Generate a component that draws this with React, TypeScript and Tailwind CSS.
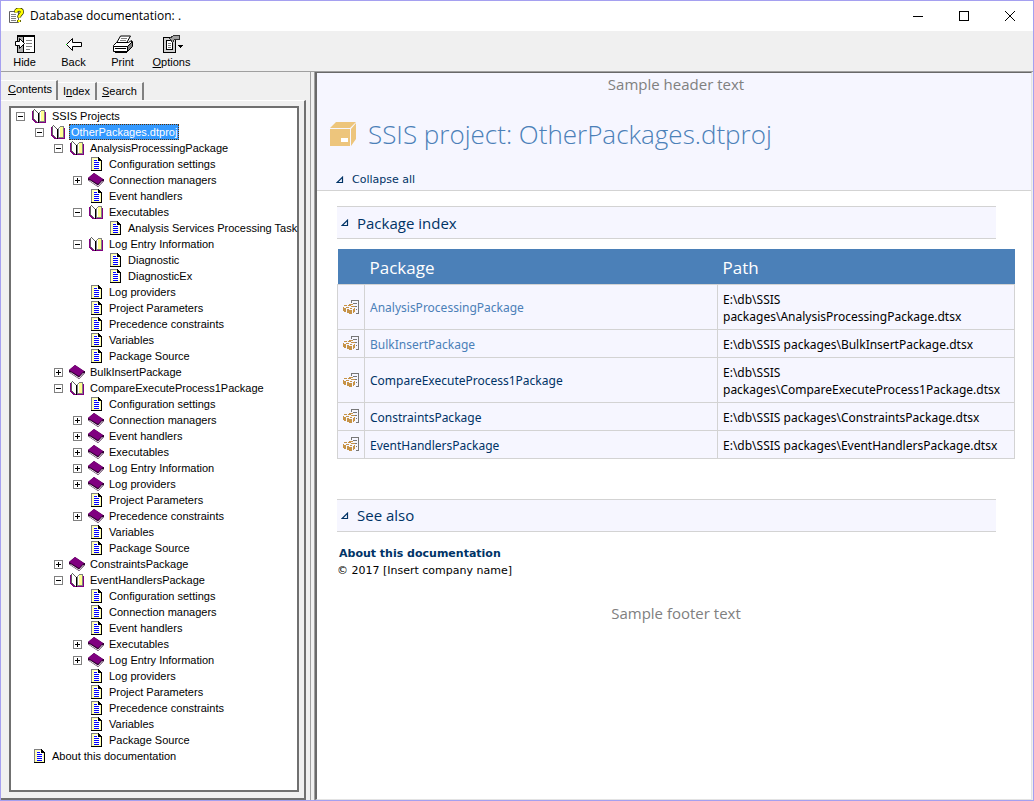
import { ReactNode } from 'react'
import clsx from 'clsx'

const TREE_FONT = 'font-["Liberation_Sans",Arial,sans-serif]'
const UI_FONT = 'font-["Open_Sans","Noto_Sans",sans-serif]'
const CELL_FONT = 'font-["Noto_Sans","Open_Sans",sans-serif]'
const VERDANA = 'font-["DejaVu_Sans",Verdana,sans-serif]'

type Kind = 'open' | 'closed' | 'page'

interface Node {
  depth: number
  kind: Kind
  label: string
  selected?: boolean
}

const open = (depth: number, label: string, selected = false): Node => ({ depth, kind: 'open', label, selected })
const closed = (depth: number, label: string): Node => ({ depth, kind: 'closed', label })
const page = (depth: number, label: string): Node => ({ depth, kind: 'page', label })

const NODES: Node[] = [
  open(0, 'SSIS Projects'),
  open(1, 'OtherPackages.dtproj', true),
  open(2, 'AnalysisProcessingPackage'),
  page(3, 'Configuration settings'),
  closed(3, 'Connection managers'),
  page(3, 'Event handlers'),
  open(3, 'Executables'),
  page(4, 'Analysis Services Processing Task'),
  open(3, 'Log Entry Information'),
  page(4, 'Diagnostic'),
  page(4, 'DiagnosticEx'),
  page(3, 'Log providers'),
  page(3, 'Project Parameters'),
  page(3, 'Precedence constraints'),
  page(3, 'Variables'),
  page(3, 'Package Source'),
  closed(2, 'BulkInsertPackage'),
  open(2, 'CompareExecuteProcess1Package'),
  page(3, 'Configuration settings'),
  closed(3, 'Connection managers'),
  closed(3, 'Event handlers'),
  closed(3, 'Executables'),
  closed(3, 'Log Entry Information'),
  closed(3, 'Log providers'),
  page(3, 'Project Parameters'),
  closed(3, 'Precedence constraints'),
  page(3, 'Variables'),
  page(3, 'Package Source'),
  closed(2, 'ConstraintsPackage'),
  open(2, 'EventHandlersPackage'),
  page(3, 'Configuration settings'),
  page(3, 'Connection managers'),
  page(3, 'Event handlers'),
  closed(3, 'Executables'),
  closed(3, 'Log Entry Information'),
  page(3, 'Log providers'),
  page(3, 'Project Parameters'),
  page(3, 'Precedence constraints'),
  page(3, 'Variables'),
  page(3, 'Package Source'),
  page(0, 'About this documentation'),
]

const PACKAGES = [
  { name: 'AnalysisProcessingPackage', visited: true },
  { name: 'BulkInsertPackage', visited: true },
  { name: 'CompareExecuteProcess1Package', visited: false },
  { name: 'ConstraintsPackage', visited: false },
  { name: 'EventHandlersPackage', visited: false },
]

export default function App() {
  return (
    <div className="flex min-h-screen flex-col border border-[#a5a0f0] bg-[#f0f0f0] text-black">
      <TitleBar />
      <Toolbar />
      <div className="flex grow">
        <Sidebar />
        <div className="w-[5px] shrink-0 border-x border-[#a0a0a0] bg-[#f0f0f0]" />
        <Content />
      </div>
    </div>
  )
}

function TitleBar() {
  return (
    <header className="flex h-[30px] items-center bg-white pl-[7px]">
      <HelpIcon />
      <h1 className={clsx(UI_FONT, 'ml-1.5 grow text-xs')}>Database documentation: .</h1>
      <WindowButton label="Minimize">
        <path d="M0 5.5h10" />
      </WindowButton>
      <WindowButton label="Maximize">
        <path d="M.5 .5h9v9h-9z" />
      </WindowButton>
      <WindowButton label="Close">
        <path d="M0 0l10 10M10 0L0 10" shapeRendering="auto" />
      </WindowButton>
    </header>
  )
}

function WindowButton({ label, children }: { label: string; children: ReactNode }) {
  return (
    <button aria-label={label} className="flex h-full w-[46px] items-center justify-center">
      <svg width="10" height="10" viewBox="0 0 10 10" fill="none" stroke="#000" shapeRendering="crispEdges">
        {children}
      </svg>
    </button>
  )
}

function Toolbar() {
  return (
    <nav className={clsx(TREE_FONT, 'flex h-[41px] border-b border-[#a0a0a0] text-[11px]')}>
      <ToolButton icon={<HideIcon />}>Hide</ToolButton>
      <ToolButton icon={<BackIcon />}>Back</ToolButton>
      <ToolButton icon={<PrintIcon />}>Print</ToolButton>
      <ToolButton icon={<OptionsIcon />}>
        <u>O</u>ptions
      </ToolButton>
    </nav>
  )
}

function ToolButton({ icon, children }: { icon: ReactNode; children: ReactNode }) {
  return (
    <button className="flex w-[49px] flex-col items-center pt-1 pr-0.5">
      {icon}
      <span className="leading-4">{children}</span>
    </button>
  )
}

function Sidebar() {
  return (
    <aside className={clsx(TREE_FONT, 'flex w-[309px] shrink-0 flex-col pr-1 text-[11px]')}>
      <div role="tablist" className="flex h-7 items-end pt-2">
        <button
          role="tab"
          aria-selected="true"
          className="h-5 w-[57px] border-t border-r-2 border-t-white border-r-[#808080] pb-1 pl-[7px] text-left leading-4"
        >
          <u>C</u>ontents
        </button>
        <Tab>
          I<u>n</u>dex
        </Tab>
        <Tab>
          <u>S</u>earch
        </Tab>
      </div>
      <div className="flex grow border-t border-r-2 border-b-2 border-t-white border-r-[#707070] border-b-[#707070] pt-[5px] pr-[5px] pb-[6px] pl-2">
        <div className="min-w-0 grow border-2 border-[#707070] bg-white">
          <ul role="tree">
            {NODES.map((node, idx) => (
              <TreeRow key={idx} node={node} />
            ))}
          </ul>
        </div>
      </div>
    </aside>
  )
}

function Tab({ children }: { children: ReactNode }) {
  return (
    <button
      role="tab"
      aria-selected="false"
      className="h-[18px] border-t border-r-2 border-t-white border-r-[#808080] px-[5px] pb-0.5 leading-4"
    >
      {children}
    </button>
  )
}

const INDENT = ['pl-[5px]', 'pl-6', 'pl-[43px]', 'pl-[62px]', 'pl-[81px]']

function TreeRow({ node }: { node: Node }) {
  return (
    <li role="treeitem" className={clsx('flex h-4 items-center whitespace-nowrap', INDENT[node.depth])}>
      <span className="w-[15px] shrink-0">{node.kind !== 'page' && <Expander open={node.kind === 'open'} />}</span>
      {node.kind === 'page' && <PageIcon />}
      {node.kind === 'open' && <OpenBookIcon />}
      {node.kind === 'closed' && <ClosedBookIcon />}
      <a
        href="#"
        className={clsx(
          'ml-[3px] px-0.5 leading-4',
          node.selected && 'bg-[#3399ff] text-white outline-1 -outline-offset-1 outline-dotted outline-[#603000]',
        )}
      >
        {node.label}
      </a>
    </li>
  )
}

function Expander({ open }: { open: boolean }) {
  return (
    <svg width="9" height="9" fill="none" shapeRendering="crispEdges">
      <path d="M.5 .5h8v8h-8z" fill="#fff" stroke="#808080" />
      <path d={open ? 'M2 4.5h5' : 'M2 4.5h5M4.5 2v5'} stroke="#000" />
    </svg>
  )
}

function Content() {
  return (
    <main
      className={clsx(
        UI_FONT,
        'mr-px min-w-0 grow border border-l-2 border-t-[#696969] border-r-[#e3e3e3] border-b-[#e3e3e3] border-l-[#696969] bg-white',
      )}
    >
      <div className="border-b border-[#d3d3d3] bg-[#f6f6ff] pb-0.5">
        <p className="pl-1 text-center text-[15px] leading-[23px] text-[#808080]">Sample header text</p>
        <div className="flex h-[76px] items-center gap-3 pl-[13px]">
          <BoxIcon />
          <h2 className="text-[26px] font-light text-[#4b80b8]">SSIS project: OtherPackages.dtproj</h2>
        </div>
        <button className={clsx(VERDANA, 'ml-[19px] flex items-center gap-2 text-[11px] leading-4 text-[#003366]')}>
          <Triangle />
          Collapse all
        </button>
      </div>
      <div className="pt-[15px] pr-4 pl-5">
        <SectionTitle>Package index</SectionTitle>
        <PackageTable />
        <div className="h-10" />
        <SectionTitle>See also</SectionTitle>
        <div className={clsx(VERDANA, 'pt-[13px] text-[11px] leading-[17px]')}>
          <a href="#" className="ml-0.5 font-bold text-[#003366]">
            About this documentation
          </a>
          <p>© 2017 [Insert company name]</p>
        </div>
      </div>
      <p className="pt-6 pl-1 text-center text-[15px] leading-5 text-[#808080]">Sample footer text</p>
    </main>
  )
}

function SectionTitle({ children }: { children: ReactNode }) {
  return (
    <h3 className="mr-[19px] flex h-[33px] items-center gap-2 border-y border-[#d3d3d3] bg-[#f6f6ff] pt-px pl-1 text-[15px] text-[#003366]">
      <Triangle />
      {children}
    </h3>
  )
}

function PackageTable() {
  return (
    <table className="mt-2.5 w-full border-collapse">
      <thead>
        <tr className="h-[35px] bg-[#4b80b8] text-left text-[17px] text-white">
          <th className="w-[27px]" />
          <th className="w-[353px] px-[5px] pt-0.5 font-normal">Package</th>
          <th className="px-[5px] pt-0.5 font-normal">Path</th>
        </tr>
      </thead>
      <tbody className={clsx(CELL_FONT, 'text-xs leading-[17px]')}>
        {PACKAGES.map(({ name, visited }) => (
          <tr key={name} className="bg-[#f6f6ff]">
            <td className="border border-[#d3d3d3]">
              <PackageIcon />
            </td>
            <td className="border border-[#d3d3d3] px-[5px] pt-1.5 pb-1">
              <a href="#" className={visited ? 'text-[#4b80b8]' : 'text-[#003366]'}>
                {name}
              </a>
            </td>
            <td className="border border-[#d3d3d3] px-[5px] pt-1.5 pb-1">
              E:\db\SSIS packages\{name}.dtsx
            </td>
          </tr>
        ))}
      </tbody>
    </table>
  )
}

function Triangle() {
  return (
    <svg width="8" height="8" viewBox="0 0 8 8" fill="none" stroke="#003366" strokeWidth="1.2">
      <path d="M1.200 6.500H6.500V1.200z" />
    </svg>
  )
}

function BoxIcon() {
  return (
    <svg width="26" height="24" viewBox="0 0 26 24" fill="#edc57c">
      <path d="M6 0h20l-6 6H0zM0 7h20v17H0zM21 7l5-6v16l-5 7z" />
      <path d="M11 16h7v4h-7z" fill="#fff" />
    </svg>
  )
}

function PackageIcon() {
  return (
    <svg width="16" height="16" viewBox="0 0 16 16" className="mx-auto" shapeRendering="crispEdges">
      <path d="M8 1h8v14h-3v-1h2V2H9v2H8zM10 4h4v1h-4zM12 7h2v1h-2zM13 10h1v1h-1z" fill="#777" />
      <path
        d="M1 6h3v1H1zM6 5h4v1H6zM3 8h3v1H3zM8 7h4v1H8zM0 8h1v4H0zM1 9h2v4H1zM4 10h2v4H4zM6 11h3v4H6zM5 6h3v1H5zM7 9h2v1H7zM10 10h2v1h-2zM10 11h1v3h-1zM11 9h1v4h-1z"
        fill="#c69348"
      />
    </svg>
  )
}

function HelpIcon() {
  return (
    <svg width="16" height="16" viewBox="0 0 16 16">
      <path d="M1.500 3.500h9v11h-9z" fill="#fff" stroke="#606060" />
      <path d="M3 6.500h5M3 8.500h5M3 10.500h5M3 12.500h5" stroke="#808080" />
      <path d="M8 4.500c0-2 1-3 3-3s3 1 3 2.500c0 2-3 2.500-3 5.500M11 12v2" fill="none" stroke="#303000" strokeWidth="4" />
      <path d="M8 4.500c0-2 1-3 3-3s3 1 3 2.500c0 2-3 2.500-3 5.500M11 12v2" fill="none" stroke="#ff0" strokeWidth="2.600" />
    </svg>
  )
}

function HideIcon() {
  return (
    <svg width="20" height="19" viewBox="0 0 20 19" shapeRendering="crispEdges">
      <path d="M2.500 .5h17v17h-17z" fill="#fff" stroke="#000" />
      <path d="M3 2h5v15H3z" fill="#b0b0b0" />
      <path d="M3 1.500h16M8.500 1v16" stroke="#000" />
      <path d="M11 5.500h6M11 8.500h6M11 11.500h6M11 14.500h4" stroke="#808080" />
      <path d="M.5 6.500h4v-3l5 5-5 5v-3h-4z" fill="#fff" stroke="#000" shapeRendering="auto" />
    </svg>
  )
}

function BackIcon() {
  return (
    <svg width="20" height="19" viewBox="0 0 20 19">
      <path d="M2.500 9.500l6-6v4h9v4h-9v4z" fill="#fff" stroke="#000" />
      <path d="M2 9h1v1H2z" fill="#0c0" />
    </svg>
  )
}

function PrintIcon() {
  return (
    <svg width="22" height="19" viewBox="0 0 22 19" stroke="#000">
      <path d="M4.500 8l4-7h10l-4 7z" fill="#fff" />
      <path d="M9 3.500h6M8 5.500h6" stroke="#808080" />
      <path d="M1.500 10.500l3-3h12l3-2v3l-3 3h-15z" fill="#fff" />
      <path d="M1.500 11.500h14v5h-14z" fill="#fff" />
      <path d="M15.500 11.500l5-5v5l-5 5z" fill="#808080" />
      <path d="M3 13.500h11M3 17.500h12" />
    </svg>
  )
}

function OptionsIcon() {
  return (
    <svg width="22" height="19" viewBox="0 0 22 19" shapeRendering="crispEdges">
      <path d="M2.500 2.500h12v15h-12z" fill="#d0d0d0" stroke="#000" />
      <path d="M5.500 5.500h6v9h-6z" fill="#fff" stroke="#000" />
      <path d="M7 8.500h3M7 10.500h3M7 12.500h3" stroke="#808080" />
      <path d="M8.500 3.500l4-3h6v4h-5l-2 3z" fill="#a0a0a0" stroke="#303030" />
      <path d="M17 10h5v1h-1v1h-1v1h-1v-1h-1v-1h-1z" />
    </svg>
  )
}

function PageIcon() {
  return (
    <svg width="16" height="16" viewBox="0 0 16 16" className="shrink-0" shapeRendering="crispEdges">
      <path d="M3 1h8v3h3v10H3z" fill="#ffffb0" />
      <path d="M6 3h4v2h2v8H6z" fill="#fff" />
      <path d="M3 1h8v1H4v12H3z" fill="#808080" />
      <path d="M10 1h1v1h1v1h1v1h1v11H3v-1h10V5h-3z" fill="#000" />
      <path d="M6 4h3v1H6zM6 6h5v1H6zM6 8h5v1H6zM6 10h5v1H6zM6 12h5v1H6z" fill="#0000ff" />
    </svg>
  )
}

function OpenBookIcon() {
  return (
    <svg width="16" height="16" viewBox="0 0 16 16" className="shrink-0" shapeRendering="crispEdges">
      <path d="M1 3h1v8h1v1h1v1h1v1h3v1H4v-1H3v-1H2v-1H1zM14 4h1v11H8v-1h6z" fill="#800080" />
      <path d="M2 2h2v1h1v1h1v1h1v9H6v-1H5v-1H4v-1H2z" fill="#fff" />
      <path d="M2 2h1v9H2zM3 1h1v1H3zM4 2h1v1H4zM5 3h1v1H5zM6 4h1v1H6zM3 11h1v1H3zM4 12h1v1H4zM5 13h1v1H5z" fill="#606060" />
      <path d="M7 5h1v10H7z" fill="#000" />
      <path d="M8 4h1V3h1V2h4v11H9v1H8z" fill="#fff" />
      <path d="M10 3h3v10h-3z" fill="#ffff90" />
      <path d="M8 4h1v10H8zM9 3h1v1H9zM10 2h3v1h-3zM13 2h1v12H9v-1h4z" fill="#808080" />
    </svg>
  )
}

function ClosedBookIcon() {
  return (
    <svg width="16" height="16" viewBox="0 0 16 16" className="shrink-0">
      <path d="M0 6l6-5 9 6h1v2l-6 6-9-6-1-1z" fill="#300030" />
      <path d="M0 6l6-5 9 6-5 5z" fill="#800080" />
      <path d="M1.500 8.500l8.500 5.500 4.500-5" fill="none" stroke="#e8e8e8" />
    </svg>
  )
}
